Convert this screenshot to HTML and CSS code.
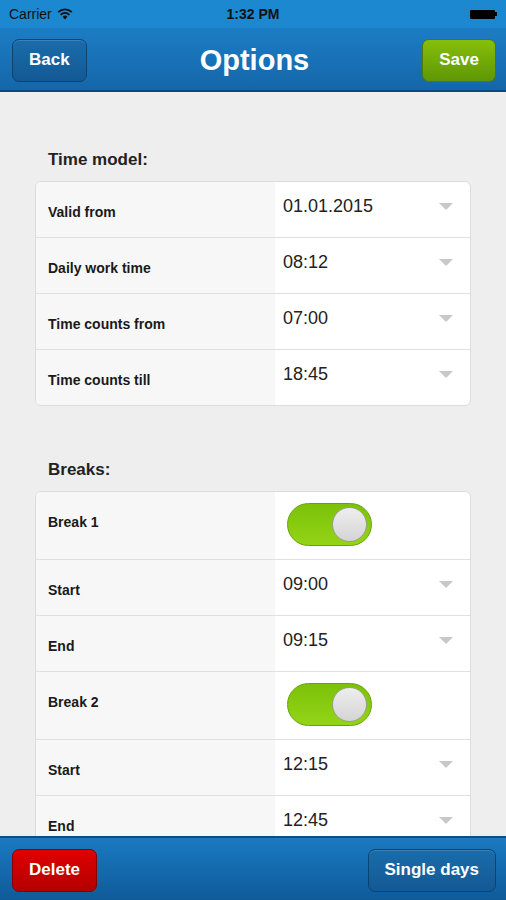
FILE: index.html
```html
<!DOCTYPE html>
<html lang="en">
<head>
  <meta charset="UTF-8">
  <meta name="viewport" content="width=device-width, initial-scale=1.0">
  <title>Options</title>
  <link rel="stylesheet" href="styles.css">
</head>
<body>
  <div class="app">
    <div class="status-bar">
      <div class="carrier">Carrier
        <svg class="wifi" width="16" height="12" viewBox="0 0 16 12">
          <path d="M8 11.5 L5.6 8.8 A3.4 3.4 0 0 1 10.4 8.8 Z" fill="#111"/>
          <path d="M3.6 6.8 A6.2 6.2 0 0 1 12.4 6.8" stroke="#111" stroke-width="1.8" fill="none"/>
          <path d="M1.2 4.2 A9.6 9.6 0 0 1 14.8 4.2" stroke="#111" stroke-width="1.8" fill="none"/>
        </svg>
      </div>
      <div class="clock">1:32 PM</div>
      <div class="battery"><span class="battery-body"></span><span class="battery-tip"></span></div>
    </div>

    <div class="nav-bar">
      <button class="btn btn-blue">Back</button>
      <h1 class="nav-title">Options</h1>
      <button class="btn btn-green">Save</button>
    </div>

    <div class="content">
      <h2 class="section-title">Time model:</h2>
      <div class="card">
        <div class="row">
          <div class="label">Valid from</div>
          <div class="value">01.01.2015<span class="arrow"></span></div>
        </div>
        <div class="row">
          <div class="label">Daily work time</div>
          <div class="value">08:12<span class="arrow"></span></div>
        </div>
        <div class="row">
          <div class="label">Time counts from</div>
          <div class="value">07:00<span class="arrow"></span></div>
        </div>
        <div class="row">
          <div class="label">Time counts till</div>
          <div class="value">18:45<span class="arrow"></span></div>
        </div>
      </div>

      <h2 class="section-title breaks">Breaks:</h2>
      <div class="card">
        <div class="row tall">
          <div class="label">Break 1</div>
          <div class="value"><span class="toggle"><span class="knob"></span></span></div>
        </div>
        <div class="row">
          <div class="label">Start</div>
          <div class="value">09:00<span class="arrow"></span></div>
        </div>
        <div class="row">
          <div class="label">End</div>
          <div class="value">09:15<span class="arrow"></span></div>
        </div>
        <div class="row tall">
          <div class="label">Break 2</div>
          <div class="value"><span class="toggle"><span class="knob"></span></span></div>
        </div>
        <div class="row">
          <div class="label">Start</div>
          <div class="value">12:15<span class="arrow"></span></div>
        </div>
        <div class="row">
          <div class="label">End</div>
          <div class="value">12:45<span class="arrow"></span></div>
        </div>
      </div>
    </div>

    <div class="bottom-bar">
      <button class="btn btn-red">Delete</button>
      <button class="btn btn-blue">Single days</button>
    </div>
  </div>
</body>
</html>
```

FILE: styles.css
```css
body {
  margin: 0;
  font-family: 'Liberation Sans', Arial, sans-serif;
  background: #eeeeee;
}

.app {
  width: 506px;
  height: 900px;
  display: flex;
  flex-direction: column;
  overflow: hidden;
}

.status-bar {
  height: 28px;
  background: #1b88cf;
  display: flex;
  align-items: center;
  justify-content: space-between;
  padding: 0 9px;
  font-size: 14px;
  color: #111;
}

.carrier {
  width: 110px;
  display: flex;
  align-items: center;
  gap: 5px;
}

.clock {
  font-weight: bold;
  font-size: 14px;
}

.battery {
  width: 110px;
  display: flex;
  justify-content: flex-end;
  align-items: center;
}

.battery-body {
  width: 25px;
  height: 9px;
  background: #000;
  border-radius: 1px;
}

.battery-tip {
  width: 2px;
  height: 4px;
  background: #000;
}

.nav-bar {
  height: 64px;
  box-sizing: border-box;
  background: linear-gradient(#1c7dc4, #1566a9);
  border-bottom: 2px solid #0c4a7c;
  display: flex;
  align-items: center;
  justify-content: space-between;
  padding: 2px 10px 0 12px;
}

.nav-title {
  margin: 0;
  color: #fff;
  font-size: 29px;
  font-weight: bold;
}

.btn {
  height: 43px;
  padding: 0 16px;
  border-radius: 7px;
  font-family: inherit;
  font-size: 17px;
  font-weight: bold;
  color: #fff;
  cursor: pointer;
}

.btn-blue {
  background: linear-gradient(#1a6cab, #135994);
  border: 1px solid #0c436f;
  box-shadow: inset 0 1px 0 rgba(255, 255, 255, 0.15);
}

.btn-green {
  background: linear-gradient(#86bf0a, #5f9606);
  border: 1px solid #4c7a05;
}

.btn-red {
  background: linear-gradient(#e00000, #b30000);
  border: 1px solid #850000;
}

.content {
  flex: 1;
  overflow: hidden;
  padding: 58px 35px 0;
}

.section-title {
  margin: 0 0 11px 13px;
  font-size: 17px;
  line-height: 20px;
  font-weight: bold;
  color: #222;
}

.section-title.breaks {
  margin-top: 54px;
}

.card {
  border: 1px solid #dcdcdc;
  border-radius: 6px;
  overflow: hidden;
  background: #fff;
}

.row {
  height: 55px;
  display: flex;
  border-top: 1px solid #e0e0e0;
}

.row:first-child {
  border-top: none;
}

.row.tall {
  height: 67px;
}

.label {
  width: 227px;
  padding: 22px 0 0 12px;
  background: #f7f7f7;
  font-size: 14px;
  font-weight: bold;
  color: #1a1a1a;
}

.value {
  flex: 1;
  display: flex;
  align-items: flex-start;
  justify-content: space-between;
  padding: 14px 17px 0 8px;
  font-size: 18px;
  color: #222;
}

.row.tall .value {
  padding-top: 11px;
}

.arrow {
  margin-top: 7px;
  width: 0;
  height: 0;
  border-left: 7px solid transparent;
  border-right: 7px solid transparent;
  border-top: 7px solid #c8c8c8;
}

.toggle {
  width: 85px;
  height: 43px;
  margin-left: 4px;
  border-radius: 22px;
  background: linear-gradient(#7cc20a, #93d416);
  border: 1px solid #6aa10a;
  display: flex;
  justify-content: flex-end;
  align-items: center;
  padding-right: 4px;
  box-sizing: border-box;
}

.knob {
  width: 35px;
  height: 35px;
  border-radius: 50%;
  background: linear-gradient(#eeeeee, #d4d4d4);
  border: 1px solid #9aa08a;
  box-sizing: border-box;
}

.bottom-bar {
  height: 64px;
  box-sizing: border-box;
  flex-shrink: 0;
  background: linear-gradient(#1a7ac2, #0f5b99);
  border-top: 2px solid #0c4f86;
  display: flex;
  align-items: center;
  justify-content: space-between;
  padding: 2px 10px 0 12px;
}
```
